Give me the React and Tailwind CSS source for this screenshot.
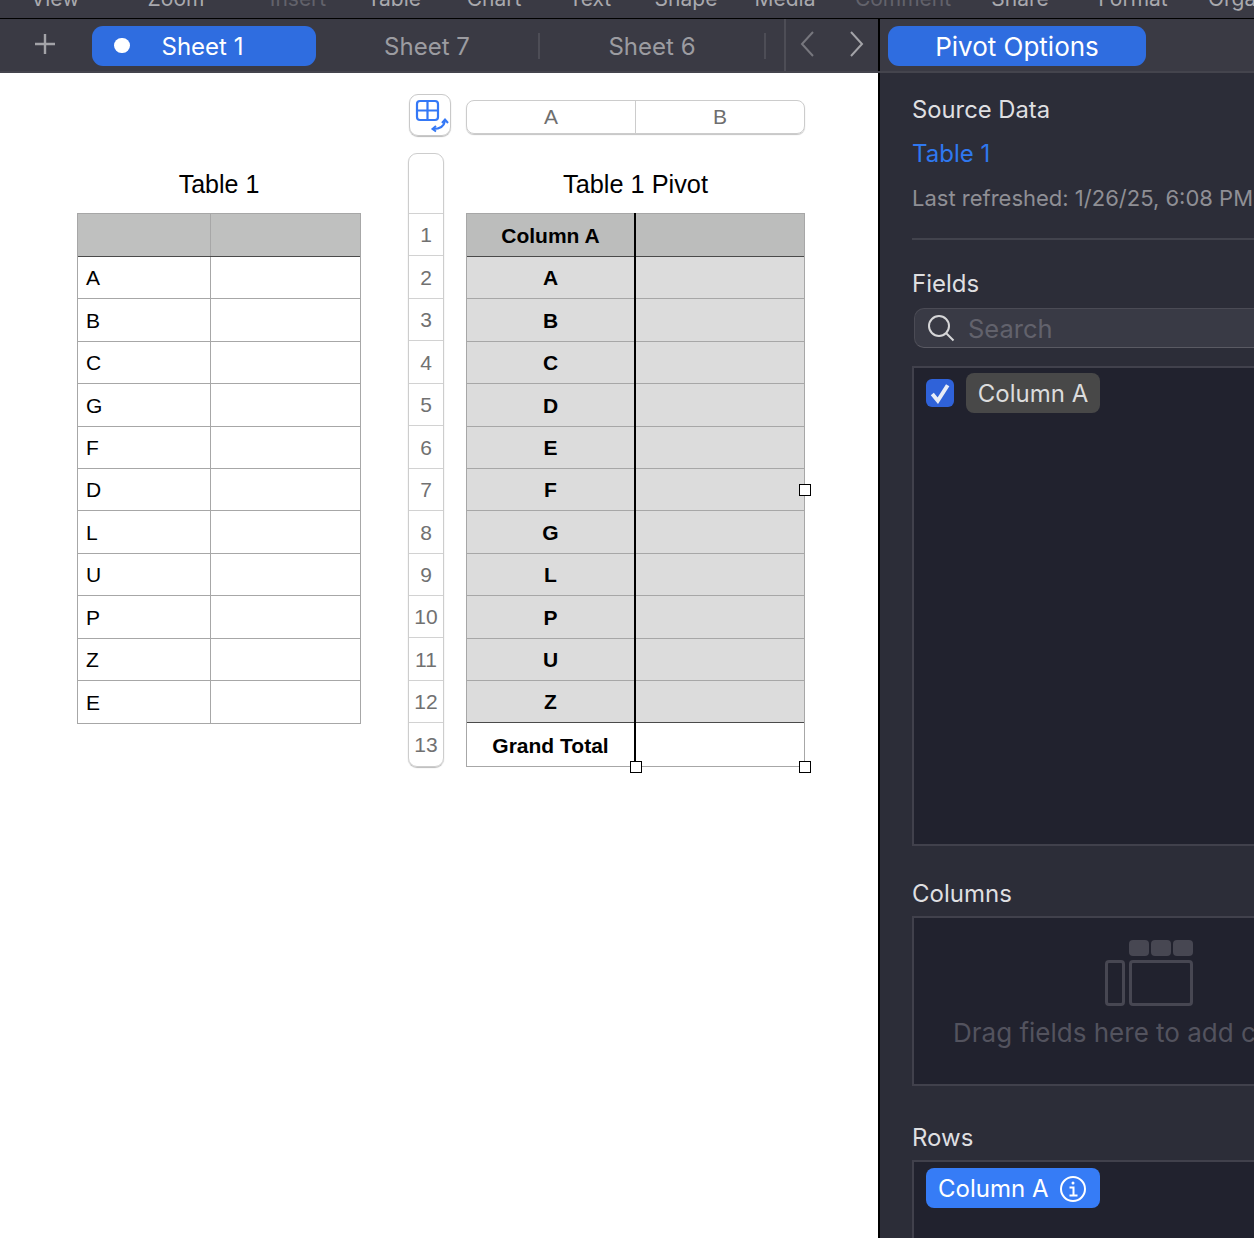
import React from 'react';

const toolbarItems = [
  { label: 'View', width: 'w-[110px]', dim: false },
  { label: 'Zoom', width: 'w-[132px]', dim: false },
  { label: 'Insert', width: 'w-[112px]', dim: true },
  { label: 'Table', width: 'w-[80px]', dim: false },
  { label: 'Chart', width: 'w-[120px]', dim: false },
  { label: 'Text', width: 'w-[72px]', dim: false },
  { label: 'Shape', width: 'w-[120px]', dim: false },
  { label: 'Media', width: 'w-[78px]', dim: false },
  { label: 'Comment', width: 'w-[158px]', dim: true },
  { label: 'Share', width: 'w-[76px]', dim: false },
  { label: 'Format', width: 'w-[150px]', dim: false },
  { label: 'Organize', width: 'w-[80px]', dim: false },
];

const sourceRows = ['A', 'B', 'C', 'G', 'F', 'D', 'L', 'U', 'P', 'Z', 'E'];
const pivotRows = ['A', 'B', 'C', 'D', 'E', 'F', 'G', 'L', 'P', 'U', 'Z'];
const rowNumbers = [1, 2, 3, 4, 5, 6, 7, 8, 9, 10, 11, 12, 13];

const Handle = ({ className }) => (
  <div className={`absolute w-[12px] h-[12px] bg-white border border-black ${className}`} />
);

const Toolbar = () => (
  <div className="h-[19px] bg-[#3a3a44] border-b border-black overflow-hidden flex font-['Inter',sans-serif] text-[21px] leading-[24px]">
    {toolbarItems.map((item) => (
      <div
        key={item.label}
        className={`${item.width} shrink-0 text-center -mt-[13px] ${item.dim ? 'text-[#62626b]' : 'text-[#a9a9ae]'}`}
      >
        {item.label}
      </div>
    ))}
  </div>
);

const Chevron = ({ d }) => (
  <svg width="18" height="28" viewBox="0 0 18 28" fill="none" stroke="currentColor" strokeWidth="2">
    <path d={d} />
  </svg>
);

const Tabs = () => (
  <div className="w-[878px] shrink-0 h-full flex items-center pt-[2px]">
    <div className="w-[92px] shrink-0 flex justify-center pr-[2px] pb-[5px]">
      <svg width="22" height="22" viewBox="0 0 22 22" stroke="#a3a3a8" strokeWidth="2.4">
        <path d="M11 1v20M1 11h20" />
      </svg>
    </div>
    <div className="relative w-[224px] h-[40px] rounded-[11px] bg-[#2f6de0] pt-[1px] flex items-center justify-center text-white">
      <div className="absolute left-[22px] top-[12px] w-[16px] h-[15px] rounded-full bg-white" />
      <span className="-ml-[3px]">Sheet 1</span>
    </div>
    <div className="w-[224px] h-[26px] pt-[1px] border-r-2 border-[#4d4d56] flex items-center justify-center text-[#9c9ca1]">Sheet 7</div>
    <div className="w-[226px] h-[26px] pt-[1px] border-r-2 border-[#4d4d56] flex items-center justify-center text-[#9c9ca1]">Sheet 6</div>
    <div className="ml-[18px] h-[52px] border-l-2 border-[#4d4d56] flex items-center pl-[13px] gap-[30px] -mt-[2px] pb-[2px]">
      <span className="text-[#77777e] flex"><Chevron d="M14 2L3 14l11 12" /></span>
      <span className="text-[#a3a3a8] flex"><Chevron d="M4 2l11 12L4 26" /></span>
    </div>
  </div>
);

const SourceTable = () => (
  <div className="ml-[77px] mt-[79px] w-[284px] shrink-0">
    <div className="h-[61px] text-[25px] leading-[64px] text-center text-black">Table 1</div>
    <div className="border-l border-r border-b border-[#a7a7a7]">
      <div className="h-[44px] flex bg-[#bfc0bf] border-t border-b border-t-[#a7a7a7] border-b-[#4a4a4a]">
        <div className="w-[133px] border-r border-[#a7a7a7]" />
      </div>
      {sourceRows.map((row) => (
        <div key={row} className="h-[42.4px] flex border-b border-[#a7a7a7] last:border-b-0">
          <div className="w-[133px] border-r border-[#a7a7a7] pl-[8px] pt-[1px] flex items-center text-[21px]">{row}</div>
        </div>
      ))}
    </div>
  </div>
);

const PivotTable = () => (
  <div className="relative ml-[47px] shrink-0 w-[397px]">
    <div className="flex mt-[21px] h-[59px]">
      <div className="ml-[1px] w-[42px] h-[42px] rounded-[9px] border border-[#c9c9c9] shadow-[0_1px_1px_#bbbbbb] pl-[4px] pt-[3px]">
        <svg width="36" height="36" viewBox="0 0 36 36" fill="none" stroke="#3478f6" strokeWidth="2.2">
          <rect x="3" y="3" width="21" height="19" rx="3" />
          <path d="M13.5 3v19M3 12.5h21" />
          <path d="M19 31c6 0 11-2 12-8" strokeWidth="2" />
          <path d="M22 28l-3.500 3 3.500 2.500M28 25l3-3.500 3 3.500" strokeWidth="2" />
        </svg>
      </div>
      <div className="ml-[15px] mt-[6px] w-[339px] h-[34px] rounded-[8px] border border-[#cccccc] shadow-[0_1px_1px_#c4c4c4] flex text-[21px] text-[#6e6e6e]">
        <div className="w-[169px] border-r border-[#cccccc] flex items-center justify-center">A</div>
        <div className="flex-1 flex items-center justify-center">B</div>
      </div>
    </div>
    <div className="flex">
      <div className="w-[36px] h-[614px] rounded-[9px] border border-[#cdcdcd] shadow-[0_1px_1px_#bbbbbb] flex flex-col">
        <div className="h-[59px] shrink-0" />
        {rowNumbers.map((n) => (
          <div key={n} className="h-[42.45px] shrink-0 pt-[1px] border-t border-[#d2d2d2] flex items-center justify-center text-[21px] text-[#717171]">{n}</div>
        ))}
      </div>
      <div className="ml-[22px] w-[339px]">
        <div className="h-[60px] text-[25.3px] leading-[62px] text-center text-black">Table 1 Pivot</div>
        <div className="relative border-l border-r border-b border-[#a7a7a7] font-bold text-[21px]">
          <div className="h-[44px] flex bg-[#bcbdbc] border-t border-b border-t-[#a7a7a7] border-b-[#4a4a4a]">
            <div className="w-[167px] pt-[1px] flex items-center justify-center">Column A</div>
          </div>
          {pivotRows.map((row, i) => (
            <div
              key={row}
              className={`h-[42.4px] flex bg-[#dcdcdc] border-b ${i === pivotRows.length - 1 ? 'border-[#4a4a4a]' : 'border-[#a7a7a7]'}`}
            >
              <div className="w-[167px] pt-[1px] flex items-center justify-center">{row}</div>
            </div>
          ))}
          <div className="h-[43px] flex">
            <div className="w-[167px] pt-[1px] flex items-center justify-center">Grand Total</div>
          </div>
          <div className="absolute left-[167px] top-0 bottom-0 w-[2px] bg-black" />
          <Handle className="left-[163px] -bottom-[7px]" />
          <Handle className="-right-[7px] -bottom-[7px]" />
          <Handle className="-right-[7px] top-[271px]" />
        </div>
      </div>
    </div>
  </div>
);

const ColumnsIcon = () => (
  <svg width="88" height="66" viewBox="0 0 88 66" fill="#474752" className="mx-auto">
    <rect x="24" y="0" width="20" height="16" rx="4" />
    <rect x="46" y="0" width="20" height="16" rx="4" />
    <rect x="68" y="0" width="20" height="16" rx="4" />
    <rect x="1.500" y="21.500" width="17" height="43" rx="2.500" fill="none" stroke="#474752" strokeWidth="3" />
    <rect x="25.500" y="21.500" width="61" height="43" rx="2.500" fill="none" stroke="#474752" strokeWidth="3" />
  </svg>
);

const PivotPanel = () => (
  <div className="w-[376px] h-full overflow-hidden border-l-2 border-black bg-[#2c2d38] font-['Inter',sans-serif] shrink-0">
    <div className="w-[560px] pl-[32px]">
      <div className="text-[23.8px] leading-[30px] mt-[22px] text-[#dfdfe1]">Source Data</div>
      <div className="text-[24px] leading-[30px] mt-[14px] text-[#2f78f0]">Table 1</div>
      <div className="text-[22px] leading-[28px] mt-[15px] text-[#8f8f95] whitespace-nowrap">Last refreshed: 1/26/25, 6:08 PM</div>
      <div className="mt-[26px] w-[474px] border-t-2 border-[#42434d]" />
      <div className="text-[24px] leading-[30px] mt-[29px] text-[#dfdfe1]">Fields</div>
      <div className="ml-[2px] mt-[9px] w-[472px] h-[40px] rounded-[10px] border border-[#4b4b55] border-b-[#5a5a63] bg-[#393a45] flex items-center pl-[12px] text-[25.5px] text-[#62626c]">
        <svg width="28" height="28" viewBox="0 0 28 28" fill="none" stroke="#d6d6d8" strokeWidth="2">
          <circle cx="12" cy="12" r="10" />
          <path d="M19 19l7.500 7.500" />
        </svg>
        <span className="ml-[13px] pt-[2px]">Search</span>
      </div>
      <div className="mt-[18px] w-[474px] h-[480px] border-2 border-[#41414c] bg-[#21222e] relative">
        <div className="flex items-center pl-[12px] pt-[5px]">
          <div className="w-[28px] h-[28px] rounded-[6px] bg-[#2f62d9] flex items-center justify-center">
            <svg width="22" height="22" viewBox="0 0 20 20" fill="none" stroke="#e8ecf6" strokeWidth="3.600">
              <path d="M3 11l5 6 9-14" />
            </svg>
          </div>
          <div className="ml-[12px] w-[134px] h-[40px] pt-[1px] rounded-[8px] bg-[#484848] flex items-center justify-center text-[24px] text-[#dcdcdc]">Column A</div>
        </div>
      </div>
      <div className="text-[24px] leading-[30px] mt-[33px] text-[#dfdfe1]">Columns</div>
      <div className="mt-[7px] w-[474px] h-[170px] border-2 border-[#41414c] bg-[#21222e] pt-[22px] text-center">
        <ColumnsIcon />
        <div className="text-[26px] leading-[32px] mt-[11px] text-[#53535e] whitespace-nowrap">Drag fields here to add columns</div>
      </div>
      <div className="text-[24px] leading-[30px] mt-[37px] text-[#dfdfe1]">Rows</div>
      <div className="mt-[7px] w-[474px] h-[170px] border-2 border-[#41414c] bg-[#21222e] pl-[12px] pt-[6px]">
        <div className="w-[174px] h-[40px] pt-[1px] rounded-[8px] bg-[#367cf6] flex items-center pl-[12px] text-[24px] text-white">
          Column A
          <svg width="28" height="28" viewBox="0 0 28 28" fill="none" stroke="white" strokeWidth="2" className="ml-[11px]">
            <circle cx="14" cy="14" r="12" />
            <circle cx="14" cy="8" r="1.500" fill="white" stroke="none" />
            <path d="M10.500 12.500H14.500V20M10.500 20.500h8" />
          </svg>
        </div>
      </div>
    </div>
  </div>
);

export default function App() {
  return (
    <div className="w-[1254px] h-[1238px] overflow-hidden bg-white flex flex-col font-['Liberation_Sans',sans-serif] text-black">
      <Toolbar />
      <div className="h-[54px] shrink-0 bg-[#3a3a44] border-b-2 border-[#44444d] flex font-['Inter',sans-serif] text-[24px]">
        <Tabs />
        <div className="flex-1 h-full border-l-2 border-black pl-[8px] pt-[7px]">
          <div className="w-[258px] h-[40px] pt-[1px] rounded-[11px] bg-[#2f6de0] flex items-center justify-center text-[26px] text-white">Pivot Options</div>
        </div>
      </div>
      <div className="flex-1 flex min-h-0">
        <div className="w-[878px] shrink-0 flex items-start">
          <SourceTable />
          <PivotTable />
        </div>
        <PivotPanel />
      </div>
    </div>
  );
}
